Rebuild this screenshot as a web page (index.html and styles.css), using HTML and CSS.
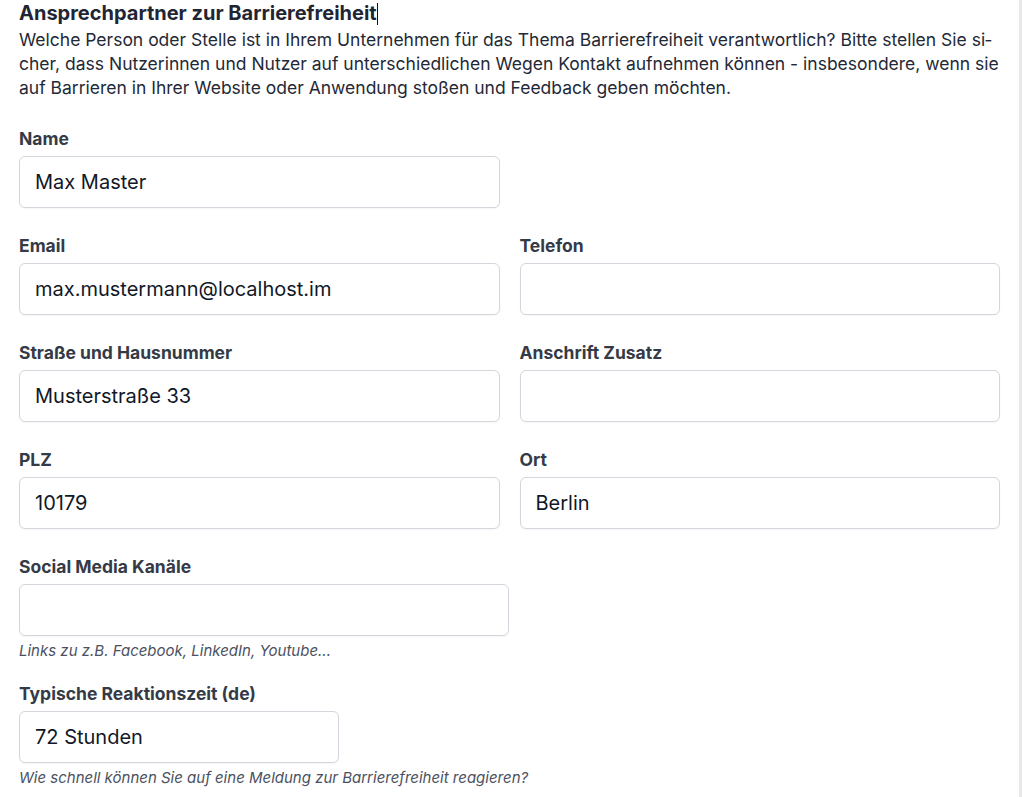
FILE: index.html
```html
<!DOCTYPE html>
<html lang="de">
<head>
<meta charset="utf-8">
<title>Ansprechpartner zur Barrierefreiheit</title>
<link rel="stylesheet" href="styles.css">
</head>
<body>
<div class="page">
  <main class="content">
    <h2 class="title">Ansprechpartner zur Barrierefreiheit<span class="caret"></span></h2>
    <p class="intro">Welche Person oder Stelle ist in Ihrem Unternehmen für das Thema Barrierefreiheit verantwortlich? Bitte stellen Sie si&shy;cher, dass Nutzerinnen und Nutzer auf unterschiedlichen Wegen Kontakt aufnehmen können - insbesondere, wenn sie auf Barrieren in Ihrer Website oder Anwendung stoßen und Feedback geben möchten.</p>

    <div class="grid">
      <div class="field">
        <label class="label" for="name">Name</label>
        <input class="input" id="name" type="text" value="Max Master">
      </div>
      <div class="field empty-cell"></div>

      <div class="field">
        <label class="label" for="email">Email</label>
        <input class="input" id="email" type="text" value="max.mustermann@localhost.im">
      </div>
      <div class="field">
        <label class="label" for="tel">Telefon</label>
        <input class="input" id="tel" type="text" value="">
      </div>

      <div class="field">
        <label class="label" for="street">Straße und Hausnummer</label>
        <input class="input" id="street" type="text" value="Musterstraße 33">
      </div>
      <div class="field">
        <label class="label" for="addr2">Anschrift Zusatz</label>
        <input class="input" id="addr2" type="text" value="">
      </div>

      <div class="field">
        <label class="label" for="plz">PLZ</label>
        <input class="input" id="plz" type="text" value="10179">
      </div>
      <div class="field">
        <label class="label" for="ort">Ort</label>
        <input class="input" id="ort" type="text" value="Berlin">
      </div>
    </div>

    <div class="field single">
      <label class="label" for="social">Social Media Kanäle</label>
      <input class="input input-social" id="social" type="text" value="">
      <p class="help">Links zu z.B. Facebook, LinkedIn, Youtube...</p>
    </div>

    <div class="field single">
      <label class="label" for="time">Typische Reaktionszeit (de)</label>
      <input class="input input-time" id="time" type="text" value="72 Stunden">
      <p class="help">Wie schnell können Sie auf eine Meldung zur Barrierefreiheit reagieren?</p>
    </div>
  </main>
  <div class="edge"></div>
</div>
</body>
</html>
```

FILE: styles.css
```css
html, body {
  margin: 0;
  padding: 0;
  background: #ffffff;
}

body {
  font-family: Inter, "Noto Sans", "Liberation Sans", sans-serif;
  color: #1f2937;
  overflow: hidden;
}

.page {
  display: flex;
  min-height: 797px;
}

.content {
  flex: 1;
  padding: 0 19px 0 19px;
}

.edge {
  width: 3px;
  background: #e9e9ea;
}

.title {
  margin: 0;
  font-size: 20px;
  line-height: 27px;
  font-weight: 700;
  color: #1f2533;
}

.caret {
  display: inline-block;
  width: 1px;
  height: 22px;
  background: #111;
  vertical-align: -5px;
}

.intro {
  margin: 1px -5px 0 0;
  font-size: 17.5px;
  line-height: 24px;
  color: #1f2937;
  hyphens: manual;
}

.grid {
  display: grid;
  grid-template-columns: 1fr 1fr;
  column-gap: 20px;
  row-gap: 25px;
  margin-top: 26px;
}

.field {
  display: flex;
  flex-direction: column;
}

.label {
  font-size: 17.5px;
  line-height: 24px;
  padding-top: 1px;
  font-weight: 700;
  color: #343a46;
  margin-bottom: 5px;
}

.input {
  box-sizing: border-box;
  height: 52px;
  width: 100%;
  border: 1px solid #d4d6dd;
  border-radius: 6px;
  padding: 0 15px;
  font-family: Inter, "Noto Sans", "Liberation Sans", sans-serif;
  font-size: 20px;
  color: #111827;
  background: #fff;
  box-shadow: 0 1px 2px rgba(0, 0, 0, 0.04);
  outline: none;
}

.single {
  margin-top: 25px;
}

.input-social {
  width: 490px;
}

.input-time {
  width: 320px;
}

.single + .single {
  margin-top: 20px;
}

.help {
  margin: 5px 0 0;
  font-size: 15px;
  line-height: 20px;
  font-style: italic;
  color: #4b5160;
}
```
